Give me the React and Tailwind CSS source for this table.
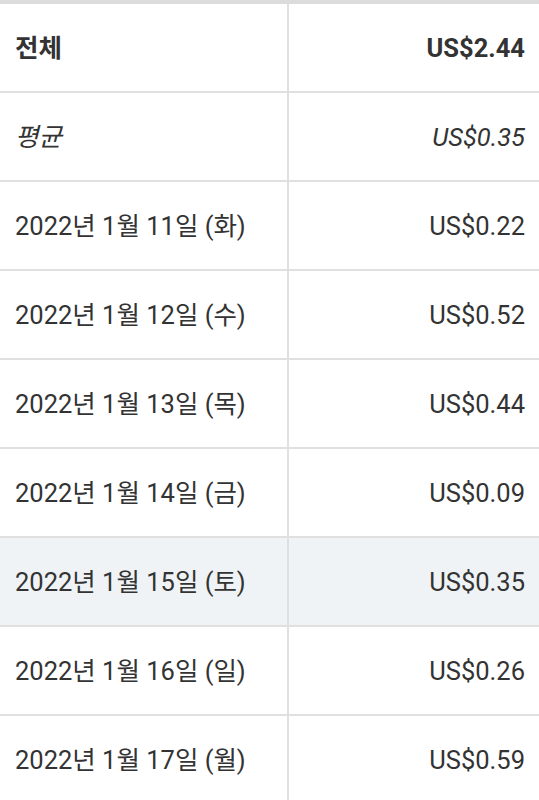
export default function App() {
  const rows = [
    ["2022년 1월 11일 (화)", "US$0.22"],
    ["2022년 1월 12일 (수)", "US$0.52"],
    ["2022년 1월 13일 (목)", "US$0.44"],
    ["2022년 1월 14일 (금)", "US$0.09"],
    ["2022년 1월 15일 (토)", "US$0.35", true],
    ["2022년 1월 16일 (일)", "US$0.26"],
    ["2022년 1월 17일 (월)", "US$0.59"],
  ];
  const font = { fontFamily: 'Roboto, "Noto Sans CJK KR", sans-serif' };
  return (
    <div className="w-[539px] h-[800px] overflow-hidden bg-white text-[#333] border-t-[4px] border-[#dcdcdc]" style={font}>
      <div className="flex h-[89px] border-b-2 border-[#e0e0e0]">
        <div className="w-[289px] border-r-2 border-[#e0e0e0] flex items-center pl-[15px] pt-[2px] text-[25.5px] font-bold">전체</div>
        <div className="flex-1 flex items-center justify-end pr-[14px] pt-[2px] text-[25.5px] font-bold">US$2.44</div>
      </div>
      <div className="flex h-[89px] border-b-2 border-[#e0e0e0]">
        <div className="w-[289px] border-r-2 border-[#e0e0e0] flex items-center pl-[15px] pt-[2px] text-[25.5px] italic">평균</div>
        <div className="flex-1 flex items-center justify-end pr-[14px] pt-[2px] text-[25.5px] italic">US$0.35</div>
      </div>
      {rows.map(([d, v, hl]) => (
        <div key={d} className={`flex h-[89px] border-b-2 border-[#e0e0e0] ${hl ? "bg-[#f0f3f6]" : ""}`}>
          <div className="w-[289px] border-r-2 border-[#e0e0e0] flex items-center pl-[15px] pt-[2px] text-[25.5px]">{d}</div>
          <div className="flex-1 flex items-center justify-end pr-[14px] pt-[2px] text-[25.5px]">{v}</div>
        </div>
      ))}
    </div>
  );
}
